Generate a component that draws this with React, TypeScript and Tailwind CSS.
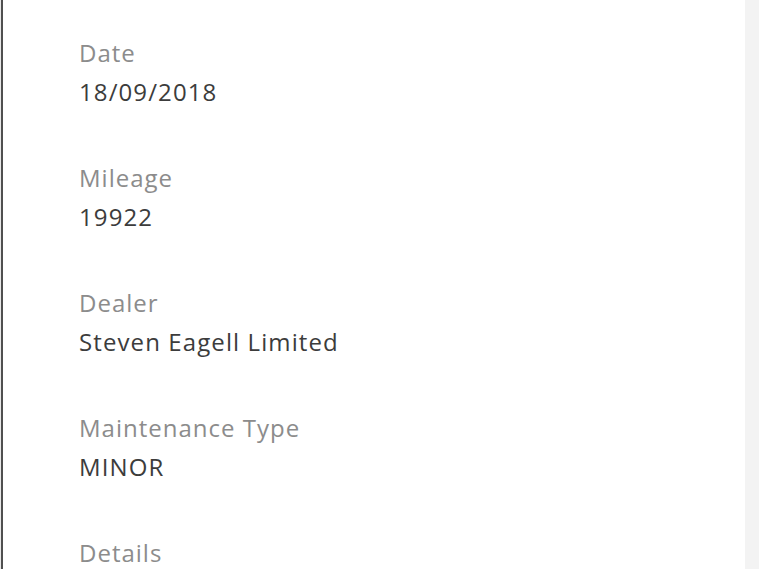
import React from "react";

const items = [
  { label: "Date", value: "18/09/2018" },
  { label: "Mileage", value: "19922" },
  { label: "Dealer", value: "Steven Eagell Limited" },
  { label: "Maintenance Type", value: "MINOR" },
  { label: "Details", value: "" },
];

export default function App() {
  return (
    <div className="flex h-[569px] w-[759px] overflow-hidden bg-white" style={{ fontFamily: '"Open Sans", "Noto Sans", sans-serif' }}>
      <div className="w-[1px] bg-[#e8e8e8]" />
      <div className="w-[2px] bg-[#505050]" />
      <div className="flex-1 bg-white pl-[76px] pt-[33px] flex flex-col gap-[47px]">
        {items.map((it) => (
          <div key={it.label} className="flex flex-col">
            <div className="text-[24px] leading-[39px] tracking-[1px] text-[#8c8c8c]">{it.label}</div>
            {it.value && <div className="text-[24px] leading-[39px] tracking-[1.1px] text-[#3c3c3c]">{it.value}</div>}
          </div>
        ))}
      </div>
      <div className="w-[14px] bg-[#f3f3f3]" />
    </div>
  );
}
